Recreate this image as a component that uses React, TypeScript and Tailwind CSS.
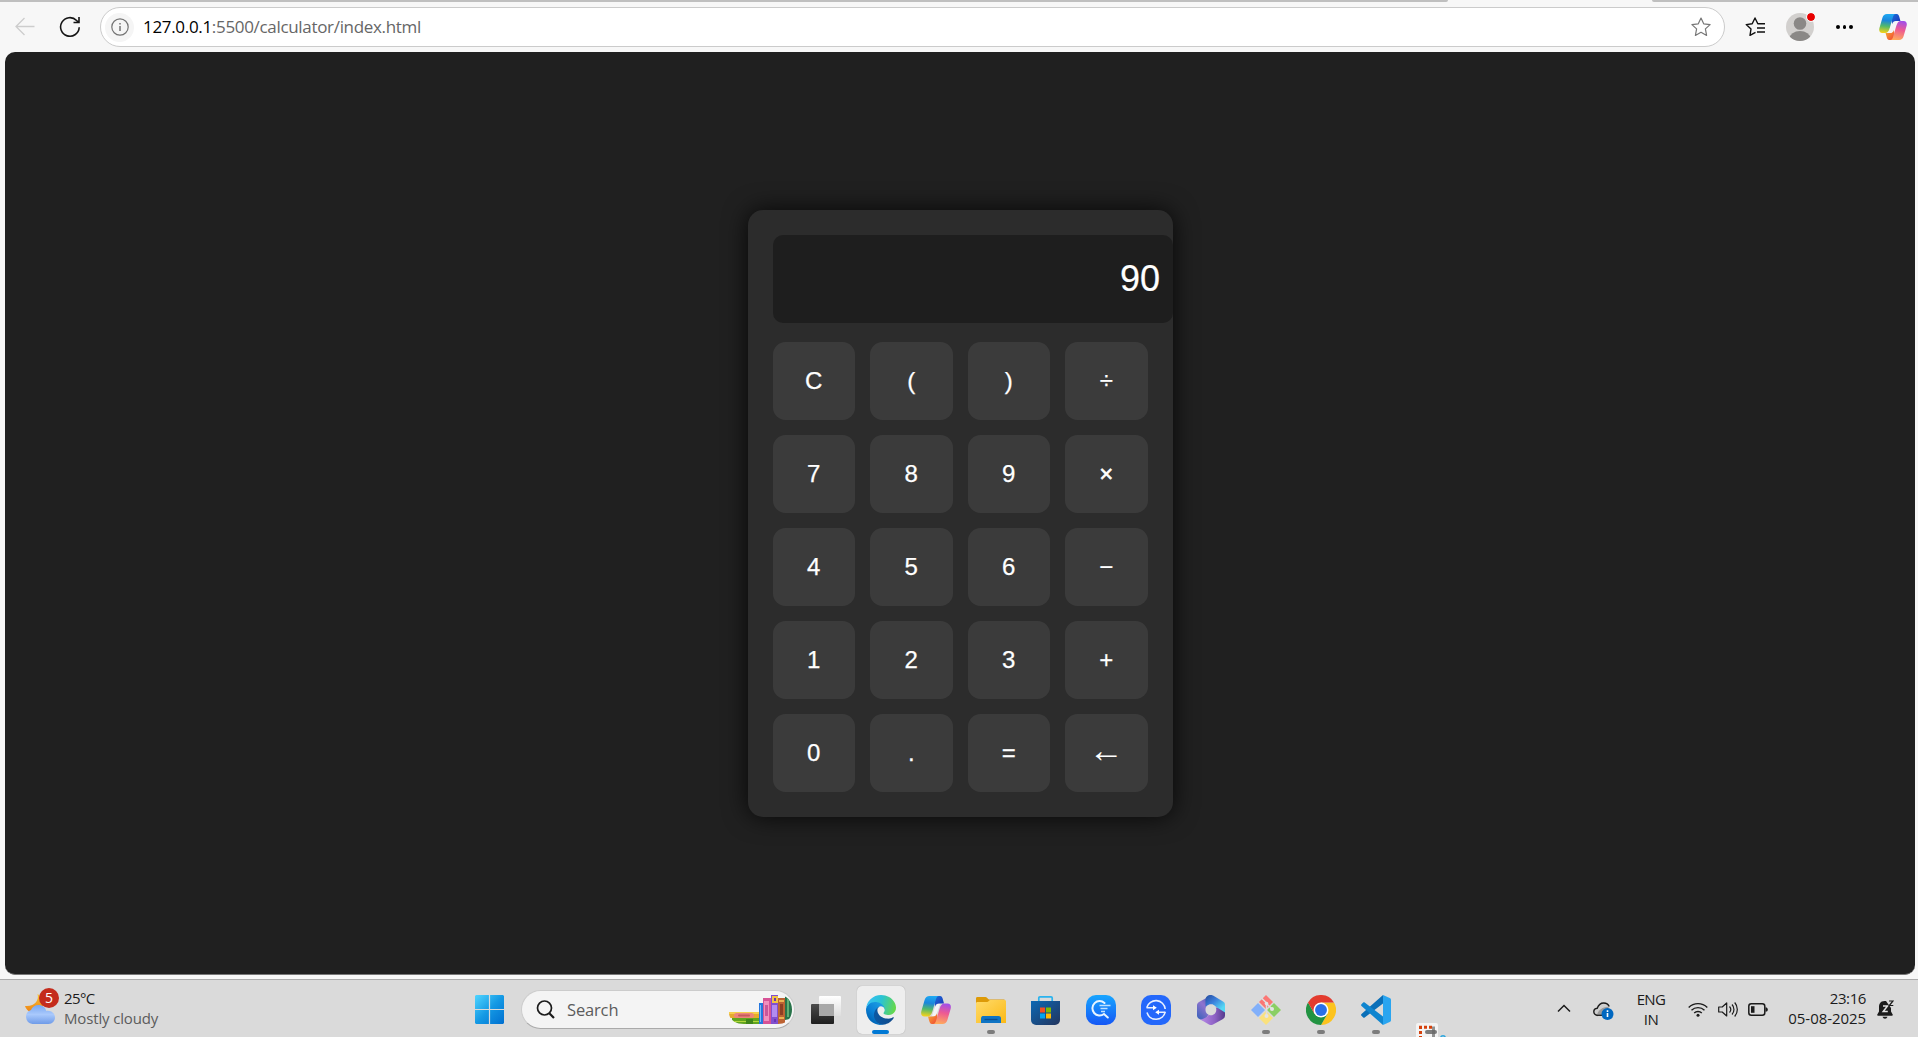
import type { ReactNode } from "react";

const keys = [
  "C", "(", ")", "÷",
  "7", "8", "9", "×",
  "4", "5", "6", "−",
  "1", "2", "3", "+",
  "0", ".", "=", "←",
];

function CopilotIcon({ id, className }: { id: string; className: string }) {
  return (
    <svg viewBox="0 0 30 28" className={className}>
      <defs>
        <linearGradient id={id + "a"} x1="0.5" y1="0" x2="0.4" y2="1">
          <stop offset="0" stopColor="#1fa9f2" />
          <stop offset="0.35" stopColor="#1b86dc" />
          <stop offset="0.65" stopColor="#53b96a" />
          <stop offset="1" stopColor="#f5d219" />
        </linearGradient>
        <linearGradient id={id + "b"} x1="0.6" y1="0" x2="0.4" y2="1">
          <stop offset="0" stopColor="#a34ee8" />
          <stop offset="0.45" stopColor="#ee5a92" />
          <stop offset="1" stopColor="#ffab5c" />
        </linearGradient>
        <linearGradient id={id + "c"} x1="0" y1="0" x2="1" y2="1">
          <stop offset="0" stopColor="#1b70d8" />
          <stop offset="1" stopColor="#1c31b8" />
        </linearGradient>
        <linearGradient id={id + "d"} x1="0" y1="0" x2="1" y2="1">
          <stop offset="0" stopColor="#f9b32f" />
          <stop offset="1" stopColor="#ef3e36" />
        </linearGradient>
      </defs>
      <path d="M19 8h-4l-4 12h4z" fill="#f4f4f6" />
      <path d="M13 0h6c1.800 0 2.400 1.500 2.900 3.400L23 7.500h-5c-2 0-3.200 1-4 3.300z" fill={"url(#" + id + "c)"} />
      <path d="M17 28h-6c-1.800 0-2.400-1.500-2.900-3.400L7 20.500h5c2 0 3.200-1 4-3.300z" fill={"url(#" + id + "d)"} />
      <path d="M8.500 0H18c-1.700 0-2.600 1.600-3.200 3.800L11.500 15c-1.100 3.600-2.300 5.500-5 5.500H3.500C.5 20.500-.4 18 .4 15L3.600 4C4.400 1.300 6 0 8.500 0z" fill={"url(#" + id + "a)"} />
      <path d="M21.500 28H12c1.700 0 2.600-1.600 3.200-3.800L18.500 13c1.100-3.600 2.300-5.500 5-5.500h3c3 0 3.900 2.500 3.100 5.500L26.400 24c-.8 2.700-2.400 4-4.900 4z" fill={"url(#" + id + "b)"} />
    </svg>
  );
}

function BrowserBar() {
  return (
    <header className="flex h-[52px] flex-col bg-[#f7f7f7]">
      <div className="flex h-[2px] justify-between">
        <div className="w-[1448px] rounded-br bg-[#bfbfbf]" />
        <div className="w-[266px] rounded-bl bg-[#bfbfbf]" />
      </div>
      <div className="flex items-center pt-[5px]">
        <svg viewBox="0 0 20 20" className="ml-[15px] h-5 w-5" fill="none" stroke="#cdcdcd" strokeWidth="1.300">
          <path d="M19.500 9.500H1M9.500 1 1 9.500l8.500 8.500" />
        </svg>
        <svg viewBox="0 0 22 22" className="ml-6 h-[22px] w-[22px]" fill="none" stroke="#151515" strokeWidth="1.600">
          <path d="M20.200 11.300A9.300 9.300 0 1 1 17.600 4.500L19.500 6.200M20 1v5.500h-5.500" />
        </svg>
        <div className="ml-[19px] flex h-10 w-[1625px] items-center rounded-full border border-[#cbcbcb] bg-white pr-[13px] pl-1">
          <div className="flex h-[29px] w-[29px] items-center justify-center rounded-full bg-[#f5f5f5]">
            <svg viewBox="0 0 18 18" className="h-[18px] w-[18px]" fill="none" stroke="#737373" strokeWidth="1.200">
              <circle cx="9" cy="9" r="8.200" />
              <path d="M9 8v5M9 5v1.500" strokeWidth="1.500" />
            </svg>
          </div>
          <div className="ml-[9px] flex-1 font-['Open_Sans',sans-serif] text-[17px] leading-6 tracking-[-0.320px] text-[#666]">
            <span className="text-black">127.0.0.1</span>:5500/calculator/index.html
          </div>
          <svg viewBox="0 0 20 20" className="h-5 w-5" fill="none" stroke="#777" strokeWidth="1.200" strokeLinejoin="round">
            <path d="m10 1 2.700 5.800 6.400.8-4.700 4.300 1.200 6.500L10 15.300l-5.600 3.100 1.200-6.500L.9 7.600l6.400-.8z" />
          </svg>
        </div>
        <svg viewBox="0 0 21 20" className="ml-5 h-5 w-[21px]" fill="none" stroke="#111" strokeWidth="1.400" strokeLinejoin="round">
          <path d="M10.500 15.300 5 18.300l1-6.300L1.200 7.600l6-.9L10 1l2.800 5.700H20M12 11h8M12 15h8" />
        </svg>
        <div className="relative ml-5 h-7 w-7">
          <svg viewBox="0 0 28 28" className="h-7 w-7">
            <clipPath id="avatar"><circle cx="14" cy="14" r="14" /></clipPath>
            <g clipPath="url(#avatar)">
              <path d="M0 0h28v28H0z" fill="#d2d0ce" />
              <circle cx="14" cy="10.500" r="6.300" fill="#8a8886" />
              <ellipse cx="14" cy="25.500" rx="10.500" ry="7.500" fill="#8a8886" />
            </g>
          </svg>
          <div className="absolute top-0 -right-px h-2 w-2 rounded-full bg-[#e80000] outline-1 outline-[#f7f7f7]" />
        </div>
        <div className="ml-[22px] flex gap-[3px]">
          <i className="h-[3.500px] w-[3.500px] rounded-full bg-black" />
          <i className="h-[3.500px] w-[3.500px] rounded-full bg-black" />
          <i className="h-[3.500px] w-[3.500px] rounded-full bg-black" />
        </div>
        <CopilotIcon id="top" className="ml-[26px] h-[26px] w-7" />
      </div>
    </header>
  );
}

function Key({ label }: { label: string }) {
  return (
    <button className="flex h-[78px] items-center justify-center rounded-[12.500px] bg-[#3b3b3b] pt-px text-[24px] leading-7">
      {label === "←" ? (
        <span className="pb-[7px] text-[35px] leading-7">{label}</span>
      ) : label === "×" ? (
        <span className="[-webkit-text-stroke:0.600px_white]">{label}</span>
      ) : (
        <span className="[-webkit-text-stroke:0.250px_white]">{label}</span>
      )}
    </button>
  );
}

function Calculator() {
  return (
    <section className="w-[425px] rounded-[15px] bg-[#2c2c2c] p-[25px] font-['Liberation_Sans',Arial,sans-serif] text-white shadow-[0_0_25px_rgba(0,0,0,0.800)]">
      <div className="mb-[19px] flex h-[88px] w-[400px] items-center justify-end rounded-[10px] bg-[#1e1e1e] pr-[12.500px] text-[36px] leading-[41px] [-webkit-text-stroke:0.200px_white]">
        90
      </div>
      <div className="grid grid-cols-4 gap-[15px]">
        {keys.map((k) => (
          <Key key={k} label={k} />
        ))}
      </div>
    </section>
  );
}

function TaskItem({ children, mark = "none" }: { children: ReactNode; mark?: "none" | "dot" | "active" }) {
  return (
    <div className={"relative mx-[3.500px] flex h-12 w-12 items-center justify-center rounded-[5px] " + (mark === "active" ? "bg-[#eeeeee] shadow-[0_0_1px_rgba(0,0,0,0.300)]" : "")}>
      {children}
      {mark === "dot" && <div className="absolute bottom-0 left-5 h-1 w-2 rounded-full bg-[#7c7c7c]" />}
      {mark === "active" && <div className="absolute bottom-0 left-[15px] h-1 w-[17px] rounded-full bg-[#0078d4]" />}
    </div>
  );
}

function Weather() {
  return (
    <div className="flex w-[475px] items-center pb-[2px] pl-[25px]">
      <div className="relative -mt-[2px] h-[34px] w-[34px]">
        <svg viewBox="0 0 34 34" className="h-[34px] w-[34px]">
          <defs>
            <linearGradient id="cloud" x1="0" y1="0" x2="0" y2="1">
              <stop offset="0" stopColor="#79a7f0" />
              <stop offset="0.500" stopColor="#a9c9fc" />
              <stop offset="1" stopColor="#6f9be8" />
            </linearGradient>
            <linearGradient id="moon" x1="0" y1="0" x2="0" y2="1">
              <stop offset="0" stopColor="#f9c332" />
              <stop offset="1" stopColor="#ed8013" />
            </linearGradient>
          </defs>
          <path d="M12.500 4c2 6-3 13-12.500 12 1.500 5 7 8 12 6.500 8-2 9-14 .5-18.500z" fill="url(#moon)" />
          <path d="M7.500 34a7.200 7.200 0 0 1-1.500-14C7 17 10 15 13.500 15c4 0 7 2.500 7.800 6 4.500-.8 8.700 2.200 8.700 6.500 0 3.500-2.600 6.500-6.500 6.500z" fill="url(#cloud)" />
        </svg>
        <div className="absolute -top-[2px] left-[14px] flex h-5 w-5 items-center justify-center rounded-full bg-[#c42b1c] font-['Open_Sans',sans-serif] text-[14px] leading-none text-white">5</div>
      </div>
      <div className="ml-[5px] font-['Open_Sans',sans-serif] text-[15px] leading-5">
        <div className="tracking-[-0.600px] text-[#1b1b1b]">25°C</div>
        <div className="tracking-[-0.150px] text-[#5c5c5c]">Mostly cloudy</div>
      </div>
    </div>
  );
}

function Books() {
  return (
    <svg viewBox="0 0 64 30" className="mt-[2px] h-[30px] w-16">
      <clipPath id="pill"><path d="M0 17h20V0h29c9 0 14 6 14 14.500S58 29 49 29H15C6 29 0 24 0 18z" /></clipPath>
      <g clipPath="url(#pill)">
        <path d="M0 17h31v6H0z" fill="#e5aa2f" />
        <path d="M0 17h31v2H0z" fill="#f6ce4c" />
        <rect x="5" y="18" width="20" height="5" rx="2.500" fill="#ed8579" />
        <rect x="9" y="19.500" width="12" height="2" rx="1" fill="#c75c5d" />
        <path d="M3 23h28v6H3z" fill="#62a51e" />
        <path d="M3 26h28v1H3z" fill="#b3d73d" />
        <path d="M17 24h7v5h-7z" fill="#40851b" />
        <path d="M30 8h4v21h-4z" fill="#2577df" />
        <path d="M31 10h1v17h-1z" fill="#79b8f8" />
        <path d="M34 3h8v26h-8z" fill="#d75296" />
        <path d="M35 6h5v20h-5z" fill="#f18fbd" />
        <path d="M36 10h3v11h-3z" fill="#c9569a" />
        <path d="M42 0h7v29h-7z" fill="#8250cf" />
        <path d="M43 1h6v7h-6z" fill="#f0c344" />
        <path d="M43 10h5v12h-5z" fill="#b38cf0" />
        <path d="M45 3h2v3h-2zM45 24h2v3h-2z" fill="#6a35b5" />
        <path d="M49 3h7v26h-7z" fill="#bd6333" />
        <path d="M50 5h5v2h-5zM50 22h5v2h-5z" fill="#ebb253" />
        <path d="M51 9h3v11h-3z" fill="#8e3f24" />
        <path d="m56 1 5-1 4 5v18l-9 2z" fill="#28734a" />
        <path d="M58 3h2v19h-2z" fill="#60ae74" />
      </g>
    </svg>
  );
}

function TaskViewIcon() {
  return (
    <svg viewBox="0 0 30 28" className="h-7 w-[30px]">
      <defs>
        <linearGradient id="tvd" x1="0" y1="0" x2="0" y2="1">
          <stop offset="0" stopColor="#4b4b4b" /><stop offset="1" stopColor="#1e1e1e" />
        </linearGradient>
        <linearGradient id="tvl" x1="0" y1="0" x2="0" y2="1">
          <stop offset="0" stopColor="#fff" /><stop offset="1" stopColor="#dedede" />
        </linearGradient>
      </defs>
      <rect y="8" width="23" height="20" rx="1" fill="url(#tvd)" />
      <rect x="8" width="22" height="20" rx="1" fill="url(#tvl)" />
      <path d="M8 8h15v12H8z" fill="#a8a8a8" />
    </svg>
  );
}

function EdgeIcon() {
  return (
    <svg viewBox="0 0 256 256" className="h-[30px] w-[30px]">
      <defs>
        <linearGradient id="eg1" x1="63" y1="177" x2="241" y2="177" gradientUnits="userSpaceOnUse">
          <stop offset="0" stopColor="#0c59a4" /><stop offset="1" stopColor="#114a8b" />
        </linearGradient>
        <linearGradient id="eg2" x1="157" y1="99" x2="46" y2="221" gradientUnits="userSpaceOnUse">
          <stop offset="0" stopColor="#1b9de2" /><stop offset="0.600" stopColor="#0a80d6" /><stop offset="1" stopColor="#0067b8" />
        </linearGradient>
        <linearGradient id="eg3" x1="20" y1="60" x2="245" y2="120" gradientUnits="userSpaceOnUse">
          <stop offset="0" stopColor="#35c1f1" /><stop offset="0.450" stopColor="#2bc3d2" /><stop offset="1" stopColor="#66d84a" />
        </linearGradient>
      </defs>
      <path fill="url(#eg1)" d="M231 190.500c-3.400 1.800-6.900 3.400-10.500 4.700a101 101 0 0 1-35.600 6.400c-47 0-87.900-32.300-87.900-73.800a31.300 31.300 0 0 1 16.300-27.300c-42.500 1.800-53.400 46.100-53.400 72 0 73.400 67.600 80.800 82.200 80.800 7.900 0 19.700-2.300 26.900-4.600l1.300-.4a128.300 128.300 0 0 0 66.600-52.800 4 4 0 0 0-5.900-5z" />
      <path fill="url(#eg2)" d="M105.700 241.400a79.200 79.200 0 0 1-22.700-21.300 80.700 80.700 0 0 1 29.500-120c3.200-1.500 8.500-4.100 15.600-4a32.400 32.400 0 0 1 25.700 13 31.900 31.900 0 0 1 6.300 18.700c0-.2 24.500-79.600-80-79.600-43.900 0-80 41.700-80 78.200a130.200 130.200 0 0 0 12.100 56 128 128 0 0 0 156.400 67 75.500 75.500 0 0 1-62.900-8z" />
      <path fill="url(#eg3)" d="M152.300 148.900c-.9 1-3.300 2.500-3.300 5.700 0 2.600 1.700 5.100 4.700 7.200 14.400 10 41.500 8.700 41.600 8.700a59.600 59.600 0 0 0 30.300-8.300 61.400 61.400 0 0 0 30.400-52.900c.3-22.400-8-37.300-11.300-43.900C223.500 23.900 177.700 0 128 0A128 128 0 0 0 0 126.200c.5-36.500 36.800-66 80-66 3.500 0 23.500.3 42 10.100 16.300 8.600 24.900 18.900 30.800 29.200 6.200 10.700 7.300 24.100 7.300 29.500s-2.700 13.300-7.800 19.900z" />
    </svg>
  );
}

function FolderIcon() {
  return (
    <svg viewBox="0 0 30 28" className="h-7 w-[30px]">
      <defs>
        <linearGradient id="fold" x1="0" y1="0" x2="1" y2="1">
          <stop offset="0" stopColor="#ffdb6b" /><stop offset="1" stopColor="#fbb915" />
        </linearGradient>
      </defs>
      <path d="M1.500 1h8c1 0 2.500 2 3.500 2.500h15.500V10H0V2.500C0 1.500.6 1 1.500 1z" fill="#dd9a08" />
      <path d="M0 7.500c0-.8.5-1.500 1.500-1.500H11c1.500 0 2-2 3.500-2h14c1 0 1.500.7 1.500 1.500V27H0z" fill="url(#fold)" />
      <path d="M5 27v-4.500C5 20.800 6 20 7.500 20h15c1.700 0 2.500.9 2.500 2.500V27z" fill="#0f74c4" />
      <path d="M8.500 23.500h13" stroke="#0a4f92" strokeWidth="1.300" />
    </svg>
  );
}

function StoreIcon() {
  return (
    <svg viewBox="0 0 30 30" className="h-[30px] w-[30px]">
      <defs>
        <linearGradient id="store" x1="0" y1="0" x2="1" y2="1">
          <stop offset="0" stopColor="#0c68b4" /><stop offset="1" stopColor="#23355e" />
        </linearGradient>
      </defs>
      <path d="M7.800 7V3c0-.8.400-1.200 1.200-1.200h11c.8 0 1.200.4 1.200 1.200v4" fill="none" stroke="#2ab3ee" strokeWidth="1.700" />
      <path d="M0 6h29v19a5 5 0 0 1-5 5H5a5 5 0 0 1-5-5z" fill="url(#store)" />
      <path d="M9 12.500h5v5H9z" fill="#f25022" /><path d="M15 12.500h5v5h-5z" fill="#7fba00" />
      <path d="M9 18.500h5v5H9z" fill="#00a4ef" /><path d="M15 18.500h5v5h-5z" fill="#ffb900" />
    </svg>
  );
}

function SearchAppIcon() {
  return (
    <svg viewBox="0 0 30 30" className="h-[30px] w-[30px]">
      <defs>
        <linearGradient id="sapp" x1="0" y1="0" x2="0" y2="1">
          <stop offset="0" stopColor="#17a5ff" /><stop offset="1" stopColor="#1557f5" />
        </linearGradient>
      </defs>
      <rect width="30" height="30" rx="10" fill="url(#sapp)" />
      <path d="M18.500 8A7.200 7.200 0 1 0 18 19l3.800 3.500" fill="none" stroke="#e8f5ff" strokeWidth="2" strokeLinecap="round" />
      <path d="M13.500 10.500h11M14.500 13.500h7M15 16.500h4" stroke="#bfe2ff" strokeWidth="1.600" />
    </svg>
  );
}

function SyncAppIcon() {
  return (
    <svg viewBox="0 0 30 30" className="h-[30px] w-[30px]">
      <rect width="30" height="30" rx="10" fill="#2468fb" />
      <g fill="none" stroke="#e8f0ff" strokeWidth="1.600">
        <path d="M5.800 12.500A9.400 9.400 0 0 1 24.200 14M24.200 17A9.400 9.400 0 0 1 6 17.500" />
        <path d="M5.500 12.800h8M24.500 17.200h-8" />
      </g>
      <path d="m12 10.300 3.800 2.500-3.800 2.500zM18 14.700l-3.800 2.500 3.800 2.500z" fill="#fff" />
    </svg>
  );
}

function OfficeIcon() {
  return (
    <svg viewBox="0 0 28 30" className="h-[30px] w-7">
      <defs>
        <linearGradient id="of1" x1="0.8" y1="0" x2="0.2" y2="1">
          <stop offset="0" stopColor="#4254b0" /><stop offset="0.450" stopColor="#8f74cf" /><stop offset="1" stopColor="#3d62bb" />
        </linearGradient>
        <linearGradient id="of2" x1="0" y1="0" x2="1" y2="1">
          <stop offset="0" stopColor="#254a9c" /><stop offset="0.400" stopColor="#3b7fdc" /><stop offset="0.800" stopColor="#55d8f4" />
        </linearGradient>
        <linearGradient id="of3" x1="0" y1="0" x2="1" y2="0">
          <stop offset="0" stopColor="#b98be8" /><stop offset="0.600" stopColor="#8c61c4" /><stop offset="1" stopColor="#553b8c" />
        </linearGradient>
        <mask id="ofm">
          <path d="M0 0h28v30H0z" fill="#fff" />
          <path d="M14 9.300c3.400 0 5.300 2.500 5.300 5.500S17 20.300 14 20.300s-5.500-2.300-5.500-5.500 2.200-5.500 5.500-5.500z" fill="#000" />
        </mask>
      </defs>
      <g mask="url(#ofm)">
        <path d="M15 0 2 7C.7 7.800 0 9 0 10.500v10C0 22 .8 23 2 23.700l3 1.500c2.600.6 5-.7 5-3.500L15 15z" fill="url(#of1)" />
        <path d="m3 24.300 8.500 5c1.800 1 3.200 1 5 0l9.500-5.400c1.300-.8 2-1.900 2-3.400v-5c-.8-2-3-3-6-3h-5l-3 4-3 4.300c-3 2.700-5 3.500-8 3.500z" fill="url(#of3)" />
        <path d="M14 0C10.500 0 8.500 2 8.500 5v6.500L14 9l4.500 2.500L28 17.500V10c0-1.700-.6-2.600-2-3.400L16.500.7C15.500.2 15 0 14 0z" fill="url(#of2)" />
      </g>
    </svg>
  );
}

function GitIcon() {
  return (
    <svg viewBox="0 0 30 30" className="h-[30px] w-[30px]">
      <path d="m15 0 7 7-7 7-7-7z" fill="#fb7774" />
      <path d="m7 8 7 7-7 7-7-7z" fill="#82b0fa" />
      <path d="m23 8 7 7-7 7-7-7z" fill="#8bcf63" />
      <path d="m15 16 7 7-7 7-7-7z" fill="#fae17d" />
      <path d="m10.500 3 5 5v13M16 9l5 5" stroke="#dedede" strokeWidth="1.500" fill="none" />
      <circle cx="15.500" cy="8.500" r="1.800" fill="#e4e4e4" /><circle cx="21" cy="14" r="2" fill="#e4e4e4" /><circle cx="15.500" cy="21" r="2" fill="#e4e4e4" />
    </svg>
  );
}

function ChromeIcon() {
  return (
    <svg viewBox="0 0 48 48" className="h-[30px] w-[30px]">
      <path d="M24 12h20.800A24 24 0 0 1 24 48l10.400-18z" fill="#fcc31e" />
      <path d="M34.400 30 24 48A24 24 0 0 1 3.200 12l10.400 18z" fill="#229342" />
      <path d="M24 12h20.800A24 24 0 0 0 3.200 12l10.400 18z" fill="#e33b2e" />
      <circle cx="24" cy="24" r="12" fill="#fff" />
      <circle cx="24" cy="24" r="9.500" fill="#2a70e8" />
    </svg>
  );
}

function CodeIcon() {
  return (
    <svg viewBox="0 0 30 30" className="h-[30px] w-[30px]">
      <path d="M22 8.500 3.700 22.400c-.5.400-1 .4-1.500 0L.5 20.800c-.6-.6-.6-1.200 0-1.800L22 0z" fill="#0a6fb8" />
      <path d="M22 21.500 3.700 7.600c-.5-.4-1-.4-1.500 0L.5 9.200c-.6.6-.6 1.200 0 1.800L22 30z" fill="#0f85cf" />
      <path d="M22 0 28.700 3c.8.400 1.300 1 1.300 2v20c0 1-.5 1.600-1.300 2L22 30z" fill="#2aa5f0" />
    </svg>
  );
}

function SnipIcon() {
  return (
    <svg viewBox="0 0 30 15" className="absolute top-[37px] left-[9px] h-[15px] w-[30px]">
      <rect width="22" height="18" rx="2" fill="#f3f3f3" />
      <path d="M16 3.500v12h3V3.500z" fill="#666" opacity="0.700" />
      <path d="M3 4.200h13M4.500 3v12" stroke="#d5400b" strokeWidth="3" strokeDasharray="3 2" />
      <circle cx="27" cy="15" r="2.300" fill="none" stroke="#2aa5de" strokeWidth="1.500" />
      <rect x="9" y="7" width="12" height="4" rx="2" fill="#666" opacity="0.850" />
    </svg>
  );
}

function Tray() {
  return (
    <div className="ml-auto flex items-center pr-[24px] font-['Open_Sans',sans-serif] text-[15px] leading-5 text-[#1b1b1b]">
      <svg viewBox="0 0 14 9" className="h-[9px] w-[14px]" fill="none" stroke="#1b1b1b" strokeWidth="1.500">
        <path d="m1 7.500 6-6 6 6" />
      </svg>
      <svg viewBox="0 0 21 18" className="mt-1 ml-[22px] h-[18px] w-[21px]">
        <path d="M4.500 13C6 7.500 9 4.500 15.500 5L12 12.500z" fill="#9b9b9b" />
        <path d="M4.500 13.500C2.200 13 .8 11.500.8 9.800c0-2 1.700-3.300 3.400-3.500C5.500 2.800 8 1 10.700 1c2.500 0 4.600 1.300 5.500 3.500" fill="#cfcfcf" stroke="#1b1b1b" strokeWidth="1.400" />
        <path d="M4.200 12.800C4.500 9 9 5 15.500 4.800V8L9 13z" fill="#9b9b9b" />
        <path d="M4 13.300h5" stroke="#1b1b1b" strokeWidth="1.300" />
        <circle cx="14.500" cy="12" r="6" fill="#0067c0" />
        <path d="M14.500 11v4M14.500 8.300v1.600" stroke="#fff" strokeWidth="1.600" />
      </svg>
      <div className="ml-[22px] w-[30px] text-center tracking-[-0.600px]">
        <div>ENG</div>
        <div>IN</div>
      </div>
      <svg viewBox="0 0 20 15" className="mt-px ml-[22px] h-[15px] w-5" fill="none" stroke="#1b1b1b" strokeWidth="1.400">
        <path d="M.7 5.500a13.200 13.200 0 0 1 18.600 0M3.500 8.300a9.200 9.200 0 0 1 13 0M6.200 11a5.400 5.400 0 0 1 7.600 0" />
        <circle cx="10" cy="13.200" r="1.500" fill="#1b1b1b" stroke="none" />
      </svg>
      <svg viewBox="0 0 20 17" className="mt-px ml-[10px] h-[17px] w-5" fill="none" stroke="#1b1b1b" strokeWidth="1.200" strokeLinejoin="round">
        <path d="M.7 6h3.500L8.700 2v13l-4.500-4H.7zM11.500 5.500c1.500 1.700 1.500 4.300 0 6M14 3.500c2.600 2.800 2.600 7.200 0 10M16.700 1.500c3.500 4 3.500 10 0 14" />
      </svg>
      <svg viewBox="0 0 20 13" className="mt-px ml-[10px] h-[13px] w-5">
        <rect x="0.800" y="0.800" width="16" height="11.400" rx="2.500" fill="none" stroke="#1b1b1b" strokeWidth="1.500" />
        <path d="M3 3.200h3.500v6.600H3z" fill="#1b1b1b" /><path d="M17.500 4.200c1.500 0 2.300 1 2.300 2.300s-.8 2.300-2.300 2.300z" fill="#1b1b1b" />
      </svg>
      <div className="ml-[18px] w-[80px] pb-[2px] text-right whitespace-nowrap">
        <div className="tracking-[-0.400px]">23:16</div>
        <div className="tracking-[-0.060px]">05-08-2025</div>
      </div>
      <svg viewBox="0 0 17 19" className="mt-px ml-[11px] h-[19px] w-[17px]">
        <path d="M7.500 1C3.500 1 2 4 2 7v4.500L.3 14.500c-.3.700 0 1.200.7 1.200h14c.7 0 1-.5.700-1.200L14 11.500V8L9 1z" fill="#1b1b1b" />
        <path d="M5.500 16.800h5c-.5 1.300-1.300 2-2.500 2s-2-.7-2.500-2z" fill="#1b1b1b" />
        <path d="M6 6h4.500L6.200 11.500h4.600" fill="none" stroke="#e2e2e2" strokeWidth="1.500" />
        <path d="M12 1h4l-3.700 4.500h4" fill="none" stroke="#1b1b1b" strokeWidth="1.200" />
      </svg>
    </div>
  );
}

function Taskbar() {
  return (
    <footer className="flex h-[58px] items-center overflow-hidden border-t border-[#ababab] bg-[#dadada]">
      <Weather />
      <svg viewBox="0 0 29 29" className="mt-[2px] h-[29px] w-[29px]">
        <defs>
          <linearGradient id="win" x1="0" y1="0" x2="1" y2="1">
            <stop offset="0" stopColor="#50d5ff" /><stop offset="0.500" stopColor="#1499e4" /><stop offset="1" stopColor="#006fd0" />
          </linearGradient>
        </defs>
        <path d="M1 0h12.900v13.900H0V1zM15.100 0H28l1 1v12.900H15.100zM0 15.100h13.900V29H1l-1-1zM15.100 15.100H29V28l-1 1H15.100z" fill="url(#win)" />
      </svg>
      <div className="mt-px ml-[17px] flex h-[39px] w-[274px] items-center rounded-full border border-b-[#aaaaaa] border-[#cccccc] bg-[#f4f4f4] pr-px pl-[14px]">
        <svg viewBox="0 0 19 19" className="h-[19px] w-[19px]" fill="none" stroke="#1b1b1b" strokeWidth="1.700">
          <circle cx="8.500" cy="8" r="7" /><path d="m13.300 13.300 4.700 4.700" strokeWidth="2.200" />
        </svg>
        <div className="mt-px ml-[12px] flex-1 font-['Open_Sans',sans-serif] text-[16.500px] leading-5 tracking-[-0.150px] text-[#5c5c5c]">Search</div>
        <Books />
      </div>
      <div className="mt-[2px] ml-[3px] flex">
        <TaskItem><TaskViewIcon /></TaskItem>
        <TaskItem mark="active"><EdgeIcon /></TaskItem>
        <TaskItem><CopilotIcon id="task" className="h-7 w-[30px]" /></TaskItem>
        <TaskItem mark="dot"><FolderIcon /></TaskItem>
        <TaskItem><StoreIcon /></TaskItem>
        <TaskItem><SearchAppIcon /></TaskItem>
        <TaskItem><SyncAppIcon /></TaskItem>
        <TaskItem><OfficeIcon /></TaskItem>
        <TaskItem mark="dot"><GitIcon /></TaskItem>
        <TaskItem mark="dot"><ChromeIcon /></TaskItem>
        <TaskItem mark="dot"><CodeIcon /></TaskItem>
        <TaskItem><SnipIcon /></TaskItem>
      </div>
      <Tray />
    </footer>
  );
}

export default function App() {
  return (
    <div className="flex h-screen w-full flex-col overflow-hidden bg-[#f7f7f7]">
      <BrowserBar />
      <main className="mr-[3px] mb-[4px] ml-[5px] flex flex-1 items-center justify-center rounded-[10px] border-b border-[#777] bg-[#202020]">
        <Calculator />
      </main>
      <Taskbar />
    </div>
  );
}
